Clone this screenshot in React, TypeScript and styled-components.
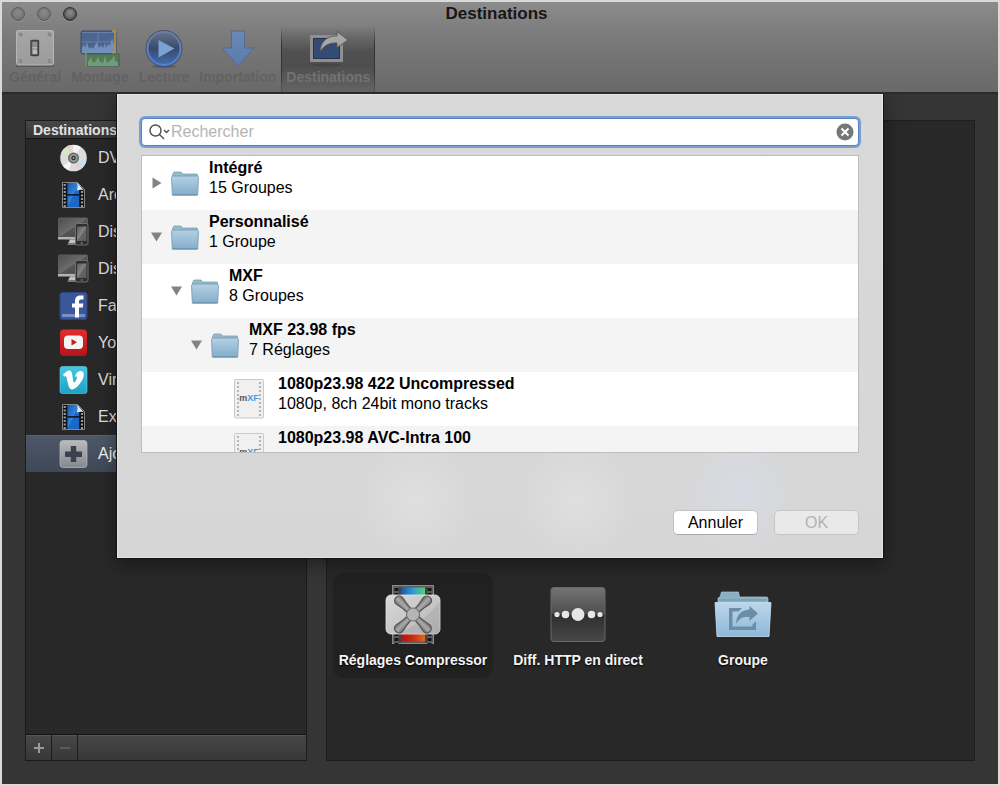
import React from "react";
import styled, { createGlobalStyle, css } from "styled-components";

const GlobalStyle = createGlobalStyle`
  * { box-sizing: border-box; }
  body {
    margin: 0;
    background: #dadada;
    font-family: "Liberation Sans", Arial, sans-serif;
    font-size: 16px;
    color: #000;
  }
  button, input { font: inherit; color: inherit; }
  ul { list-style: none; margin: 0; padding: 0; }
  svg { display: block; flex: none; }
`;

const Page = styled.div`
  min-height: 100vh;
  padding: 2px;
  display: flex;
`;

const Window = styled.div`
  position: relative;
  flex: 1;
  display: flex;
  flex-direction: column;
  min-width: 0;
  background: #353535;
`;

const Header = styled.header`
  background: linear-gradient(#8c8c8c, #7a7a7a 40%, #696969);
  border-bottom: 2px solid #2b2b2b;
`;

const TitleBar = styled.div`
  display: grid;
  grid-template-columns: 1fr auto 1fr;
  align-items: center;
  height: 24px;
  padding: 0 16px 0 9px;
`;

const Lights = styled.div`
  display: flex;
  gap: 12px;
`;

const Light = styled.button<{ $dark?: boolean }>`
  width: 14px;
  height: 14px;
  padding: 0;
  border: 1px solid ${(p) => (p.$dark ? "#2c2c2c" : "#5c5c5c")};
  border-radius: 50%;
  background: radial-gradient(circle at 50% 35%, ${(p) => (p.$dark ? "#8c8c8c, #626262" : "#8a8a8a, #777")} 70%);
  box-shadow: 0 1px 0 rgba(255, 255, 255, 0.15), inset 0 0 2px ${(p) => (p.$dark ? "#222" : "#666")};
`;

const Title = styled.h1`
  margin: 0;
  font-size: 17px;
  line-height: 22px;
  font-weight: bold;
  color: #161616;
`;

const Toolbar = styled.nav`
  display: flex;
  height: 66px;
  padding-left: 2px;
`;

const Tool = styled.button<{ $active?: boolean }>`
  display: flex;
  flex-direction: column;
  align-items: center;
  padding: 4px 5px 0;
  border: 0;
  background: none;
  font-size: 14px;
  font-weight: bold;
  line-height: 18px;
  color: #626262;
  ${(p) =>
    p.$active &&
    css`
      color: #727272;
      background:
        linear-gradient(transparent, #333 30%, #333 70%, #555) left / 1px 100% no-repeat,
        linear-gradient(transparent, #333 30%, #333 70%, #555) right / 1px 100% no-repeat,
        linear-gradient(transparent, #505050 40%, #4e4e4e 60%, #646464);
    `}
`;

const Main = styled.main`
  flex: 1;
  display: flex;
  gap: 19px;
  padding: 26px 23px 23px;
`;

const Sidebar = styled.aside`
  flex: none;
  width: 282px;
  display: flex;
  flex-direction: column;
  background: #282828;
  border: 1px solid #1b1b1b;
`;

const SidebarTitle = styled.h2`
  margin: 0;
  padding: 0 7px;
  font-size: 14px;
  line-height: 18px;
  height: 18px;
  color: #e2e2e2;
  background: linear-gradient(#474747, #363636);
  border-bottom: 1px solid #161616;
`;

const Destinations = styled.ul`
  flex: 1;
`;

const Destination = styled.li<{ $selected?: boolean }>`
  display: flex;
  align-items: center;
  gap: 9px;
  height: 37px;
  padding-left: 31px;
  color: #dedede;
  white-space: nowrap;
  ${(p) =>
    p.$selected &&
    css`
      background: linear-gradient(#4e5868, #3f4856);
      box-shadow: inset 0 1px 0 #586273;
      color: #f2f2f2;
    `}
`;

const SidebarFooter = styled.div`
  display: flex;
  height: 26px;
  border-top: 1px solid #141414;
  background: linear-gradient(#484848, #373737);
  box-shadow: inset 0 1px 0 #565656;
`;

const FooterButton = styled.button<{ $faint?: boolean }>`
  display: grid;
  place-items: center;
  width: 26px;
  padding: 0;
  border: 0;
  border-right: 1px solid #1c1c1c;
  background: none;
  color: ${(p) => (p.$faint ? "#5c5c5c" : "#9a9a9a")};
`;

const Gallery = styled.section`
  flex: 1;
  min-width: 0;
  padding: 452px 6px 80px;
  background: #282828;
  border: 1px solid #1e1e1e;
`;

const Tiles = styled.div`
  display: flex;
  flex-wrap: wrap;
  gap: 5px;
`;

const Tile = styled.button<{ $selected?: boolean }>`
  width: 160px;
  height: 105px;
  display: flex;
  flex-direction: column;
  align-items: center;
  gap: 6px;
  padding: 11px 0 0;
  border: 0;
  border-radius: 10px;
  background: ${(p) => (p.$selected ? "#212121" : "none")};
  color: #f4f4f4;
  font-size: 14px;
  font-weight: bold;
  line-height: 20px;
  white-space: nowrap;
  text-shadow: 0 1px 2px #000;
`;

const Sheet = styled.div`
  position: absolute;
  top: 92px;
  left: 115px;
  right: 115px;
  padding: 24px 24px 23px;
  background:
    radial-gradient(circle at 299px 406px, rgba(236, 236, 236, 0.4), transparent 60px),
    radial-gradient(circle at 460px 406px, rgba(236, 236, 236, 0.4), transparent 60px),
    radial-gradient(circle at 622px 402px, rgba(216, 222, 236, 0.6), transparent 60px),
    linear-gradient(#d9d9d9, #d6d6d6);
  box-shadow: inset 0 0 0 1px rgba(255, 255, 255, 0.35), 0 0 0 1px #141414, 0 6px 18px rgba(0, 0, 0, 0.4);
  clip-path: inset(0 -30px -40px -30px);
`;

const SearchField = styled.label`
  display: flex;
  align-items: center;
  height: 28px;
  padding: 0 4px 0 7px;
  background: #fff;
  border: 1px solid #5b83bc;
  border-radius: 4px;
  box-shadow: 0 0 0 2px #7b9fd4;
`;

const SearchInput = styled.input`
  flex: 1;
  min-width: 0;
  padding: 0;
  border: 0;
  outline: 0;
  background: none;
  line-height: 20px;
  &::placeholder { color: #b4b4b4; opacity: 1; }
`;

const ClearButton = styled.button`
  padding: 0;
  border: 0;
  background: none;
`;

const Browser = styled.ul`
  && { margin-top: 9px; }
  height: 298px;
  overflow: hidden;
  background: #fff;
  border: 1px solid #bdbdbd;
`;

const BrowserRow = styled.li<{ $depth: number }>`
  display: flex;
  height: 54px;
  padding-left: ${(p) => 9 + p.$depth * 20}px;
  &:nth-child(even) { background: #f4f4f4; }
`;

const PresetRow = styled(BrowserRow)`
  padding-left: 92px;
`;

const Disclosure = styled.button`
  align-self: center;
  width: 10px;
  height: 12px;
  margin-right: 10px;
  padding: 0;
  border: 0;
  background: none;
`;

const RowIcon = styled.span<{ $gap: number }>`
  align-self: center;
  margin-right: ${(p) => p.$gap}px;
`;

const RowText = styled.div`
  padding-top: 2px;
  line-height: 20px;
  white-space: nowrap;
`;

const RowName = styled.div`
  font-weight: bold;
`;

const Actions = styled.div`
  display: flex;
  justify-content: flex-end;
  gap: 16px;
  margin-top: 57px;
`;

const ActionButton = styled.button`
  width: 85px;
  height: 25px;
  padding: 0;
  border: 1px solid #c2c2c2;
  border-bottom-color: #a9a9a9;
  border-radius: 5px;
  background: #fff;
  line-height: 20px;
  &:disabled {
    background: #e9e9e9;
    border-color: #c6c6c6;
    color: #b2b2b2;
  }
`;

/* Toolbar icons */

const SwitchIcon = () => (
  <svg width="38" height="38" viewBox="0 0 38 38">
    <defs>
      <linearGradient id="plate" x1="0" y1="0" x2="0" y2="1">
        <stop offset="0" stopColor="#a6a6a6" /><stop offset="1" stopColor="#9b9c9e" />
      </linearGradient>
    </defs>
    <rect x="0" y="2" width="38" height="35" rx="1.5" fill="#4d4d4d" opacity=".7" />
    <rect x=".5" y=".5" width="37" height="34.500" rx="1.5" fill="url(#plate)" stroke="#b6b6b6" />
    {[[4.5, 4.5], [33.5, 4.5], [4.5, 31], [33.5, 31]].map(([x, y]) => (
      <g key={`${x}-${y}`}><circle cx={x} cy={y} r="1.9" fill="#7d7d7d" /><path d={`M${x - 1} ${y + 1}l2-2`} stroke="#b5b5b5" strokeWidth=".8" /></g>
    ))}
    <rect x="15" y="10.500" width="7.500" height="15" rx=".8" fill="#6a6a6a" stroke="#404040" strokeWidth="1.300" />
    <rect x="16.500" y="12" width="4.500" height="4" fill="#929292" /><rect x="16.500" y="16" width="4.500" height="8" fill="#bababa" />
    <path d="M16.500 16.500h4.500M16.500 19h4.500" stroke="#868686" />
  </svg>
);

const TimelineIcon = () => (
  <svg width="40" height="38" viewBox="0 0 40 38">
    <rect x="1" y="1" width="35" height="23" rx="2" fill="#4b638a" stroke="#3d4c69" />
    <path d="M2 2h33v10H2z" fill="#4c6690" /><path d="M2 2.500h33M18 2v10M2 12h33" stroke="#6781aa" />
    <path d="M2 23v-5l2-4 1 4 2-6 2 7 2-2 2 2 2-4 2-3 2 6 2-3 2 3 2-5 1 5 2-4 2 2 2-8 2 7 1 2v6z" fill="#7190bf" />
    <path d="M32 1h3v22h-3" fill="none" stroke="#bf9648" strokeWidth="1.6" />
    <path d="M6 24h33v12H7z" fill="#547a5c" stroke="#41604a" />
    <path d="M6 20v16" stroke="#729b78" strokeWidth="1.5" />
    <path d="M8 36v-4l3-5 2 6 3-2 2-4 2 5 3 1 2-7 2 7 3-2 2-2 2-4 1 6 3 1v4z" fill="#719c79" />
  </svg>
);

const PlayIcon = () => (
  <svg width="40" height="38" viewBox="0 0 40 38">
    <defs>
      <linearGradient id="play" x1="0" y1="0" x2="0" y2="1">
        <stop offset="0" stopColor="#64728c" /><stop offset=".5" stopColor="#384b6d" /><stop offset="1" stopColor="#456db0" />
      </linearGradient>
      <linearGradient id="rim" x1="0" y1="0" x2="0" y2="1">
        <stop offset="0" stopColor="#6e7f9d" /><stop offset="1" stopColor="#4c83dc" />
      </linearGradient>
    </defs>
    <ellipse cx="20" cy="36.500" rx="12" ry="1.5" fill="#4b4b4b" opacity=".6" />
    <circle cx="20" cy="18.500" r="18.500" fill="#45536d" />
    <circle cx="20" cy="18.500" r="16.500" fill="url(#play)" stroke="url(#rim)" strokeWidth="2" />
    <path d="M14.500 10l16 8.500-16 9z" fill="#7da1d3" />
  </svg>
);

const ImportIcon = () => (
  <svg width="38" height="38" viewBox="0 0 38 38">
    <defs>
      <linearGradient id="import" x1="0" y1="0" x2="0" y2="1">
        <stop offset="0" stopColor="#6a88b8" /><stop offset="1" stopColor="#5b7bae" />
      </linearGradient>
    </defs>
    <path d="M12.500 1h13v17h9.500L19 36 3 18h9.500z" fill="url(#import)" stroke="#546a90" />
  </svg>
);

const ShareIcon = () => (
  <svg width="40" height="38" viewBox="0 0 40 38">
    <ellipse cx="18" cy="35" rx="15" ry="1.5" fill="#3f3f3f" opacity=".6" />
    <rect x="3.500" y="6.500" width="30" height="24" fill="#344c74" stroke="#8f8f8f" strokeWidth="3" />
    <path d="M5.500 8.500h26v20h-26z" fill="none" stroke="#243350" />
    <path d="M12 22C12.500 11 20 5.500 29 6V1.500l11 8.500-11 7.500v-4.500C22 12.500 16 15 12 22z" fill="#a6a6a6" stroke="#515151" strokeWidth=".8" />
  </svg>
);

/* Sidebar icons, all in a 32px wide box */

const DiscIcon = () => (
  <svg width="32" height="30" viewBox="0 0 32 30">
    <circle cx="16.500" cy="15" r="13.300" fill="#dcdcd8" />
    <path d="M16.500 15L4 11a13 13 0 0 1 5-7z" fill="#cfe8c9" /><path d="M16.500 15L9 4a13 13 0 0 1 4-2z" fill="#f2d1bc" />
    <path d="M16.500 15L29 19a13 13 0 0 1-4 6z" fill="#c4e2ec" /><path d="M16.500 15L25 25a13 13 0 0 1-4 2z" fill="#e9cbdc" />
    <path d="M16.500 15L16 2a13 13 0 0 1 8 2z" fill="#f5f5f5" /><path d="M16.500 15L12 27a13 13 0 0 1-6-4z" fill="#f5f5f5" />
    <circle cx="16.500" cy="15" r="5.500" fill="#666" /><circle cx="16.500" cy="15" r="4" fill="#999" />
    <circle cx="16.500" cy="15" r="2.200" fill="#2d2d2d" /><circle cx="16.500" cy="15" r="1" fill="#aaa" />
  </svg>
);

const FilmIcon = () => (
  <svg width="32" height="30" viewBox="0 0 32 30">
    <defs>
      <linearGradient id="film" x1="0" y1="0" x2="1" y2="1">
        <stop offset="0" stopColor="#1559ad" /><stop offset=".5" stopColor="#3585dc" /><stop offset=".52" stopColor="#1c69c8" /><stop offset="1" stopColor="#1c65c2" />
      </linearGradient>
    </defs>
    <path d="M5.500 2.500h15l7 7v18h-22z" fill="#0d0d0d" stroke="#858585" />
    <path d="M10 3h12v11H10zM10 15.500h12V27H10z" fill="url(#film)" />
    <path d="M7.700 4v23M25 11v16" stroke="#9a9a9a" strokeWidth="2.200" strokeDasharray="2 1.500" />
    <path d="M10 3v24M22.500 10v17M10 14.800h12" stroke="#0f2440" />
    <path d="M19.500 2l8 9c-2-2-5-1.500-8-.5 1.500-3 1.500-6 0-8.500z" fill="#e8e8e8" />
  </svg>
);

const DevicesIcon = () => (
  <svg width="32" height="30" viewBox="0 0 32 30">
    <defs>
      <linearGradient id="screen" x1="0" y1="0" x2="1" y2="1">
        <stop offset="0" stopColor="#4d4d4d" /><stop offset=".5" stopColor="#6c6c6c" /><stop offset=".52" stopColor="#565656" /><stop offset="1" stopColor="#444" />
      </linearGradient>
      <linearGradient id="phone" x1="0" y1="0" x2="1" y2="1">
        <stop offset="0" stopColor="#5b5b5b" /><stop offset=".5" stopColor="#858585" /><stop offset=".52" stopColor="#666" /><stop offset="1" stopColor="#5a5a5a" />
      </linearGradient>
    </defs>
    <rect x="1.500" y="1" width="29" height="19" rx="1" fill="url(#screen)" stroke="#5e5e5e" />
    <path d="M1 20h18v2.500H1z" fill="#b4b4b4" /><path d="M13 22.500h5v4h-7z" fill="#c2c2c2" /><path d="M10.500 27.300h9" stroke="#8a8a8a" />
    <rect x="18.500" y="6.500" width="12.500" height="21.500" rx="2" fill="#2e2e2e" stroke="#707070" />
    <path d="M20 9.500h9.500v14.500H20z" fill="url(#phone)" /><circle cx="24.700" cy="26" r="1" fill="#777" />
  </svg>
);

const FacebookIcon = () => (
  <svg width="32" height="30" viewBox="0 0 32 30">
    <rect x="3" y="1.500" width="27" height="27" rx="2.500" fill="#3a579b" stroke="#2c4580" />
    <path d="M5 23h23v3H5z" fill="#7b90c0" />
    <path d="M18 26.500v-10h-3v-4h3V10c0-4 2.500-5.500 5.500-5.500h3V8.500h-2c-2 0-2.500.7-2.500 2v2h4.300l-.5 4H22v10z" fill="#fff" />
  </svg>
);

const YouTubeIcon = () => (
  <svg width="32" height="30" viewBox="0 0 32 30">
    <defs>
      <linearGradient id="tube" x1="0" y1="0" x2="0" y2="1">
        <stop offset="0" stopColor="#e52c2e" /><stop offset="1" stopColor="#b81218" />
      </linearGradient>
    </defs>
    <rect x="3" y="1.500" width="27" height="26.500" rx="4" fill="url(#tube)" />
    <rect x="7" y="7.500" width="19" height="13.500" rx="4" fill="#f4f4f4" />
    <path d="M14.500 11l5.500 3.200-5.500 3.300z" fill="#c71b20" />
  </svg>
);

const VimeoIcon = () => (
  <svg width="32" height="30" viewBox="0 0 32 30">
    <defs>
      <linearGradient id="vim" x1="0" y1="0" x2="0" y2="1">
        <stop offset="0" stopColor="#4bc6e0" /><stop offset="1" stopColor="#1ba3c6" />
      </linearGradient>
    </defs>
    <rect x="3" y="1.500" width="27" height="27" rx="2.500" fill="url(#vim)" stroke="#68d2e6" strokeWidth=".6" />
    <path d="M6 9.500c2.500-2.300 4.500-4 6-4 2.300-.1 3 2 3.400 5 .5 3.500.9 7 1.700 7 .8 0 2.800-3.300 2.900-4.800.1-1.400-1-1.500-2.200-1 1-3.500 3.300-6 6.200-5.700 2.400.2 3 2 2.700 4.500-.7 5.500-7.500 14-11.500 14-3.200 0-3.900-4.500-4.800-8.500-.6-2.800-1-5-1.700-5-.4 0-.8.300-1.500.8z" fill="#fff" />
  </svg>
);

const AddIcon = () => (
  <svg width="32" height="30" viewBox="0 0 32 30">
    <defs>
      <linearGradient id="add" x1="0" y1="0" x2="0" y2="1">
        <stop offset="0" stopColor="#b9bbbe" /><stop offset="1" stopColor="#85888d" />
      </linearGradient>
    </defs>
    <rect x="3" y="1.500" width="27" height="27" rx="3" fill="url(#add)" stroke="#c6c8cb" strokeWidth=".6" />
    <path d="M13.800 7h5.400v5.500H25v5.400h-5.800V23h-5.400v-5.100H8v-5.400h5.800z" fill="#3b424e" />
  </svg>
);

/* Gallery icons */

const CompressorIcon = () => (
  <svg width="60" height="60" viewBox="0 0 60 60">
    <defs>
      <linearGradient id="cool"><stop offset="0" stopColor="#1a55b5" /><stop offset=".5" stopColor="#2f9bd0" /><stop offset="1" stopColor="#55d07c" /></linearGradient>
      <linearGradient id="warm"><stop offset="0" stopColor="#b5120e" /><stop offset=".5" stopColor="#c62c14" /><stop offset="1" stopColor="#dd6b20" /></linearGradient>
      <linearGradient id="body" x1="0" y1="0" x2="1" y2="1"><stop offset="0" stopColor="#dadada" /><stop offset="1" stopColor="#b4b4b4" /></linearGradient>
      <linearGradient id="blade" x1="0" y1="0" x2="1" y2="0"><stop offset="0" stopColor="#6e6e6e" /><stop offset=".5" stopColor="#acacac" /><stop offset="1" stopColor="#707070" /></linearGradient>
    </defs>
    <rect x="9.500" y="1.500" width="41" height="58" fill="#5d5d5d" stroke="#8a8a8a" />
    <path d="M13.500 4v56M46.500 4v56" stroke="#161616" strokeWidth="4" strokeDasharray="3 2" />
    <path d="M17 3v56M43 3v56" stroke="#2a2a2a" />
    <path d="M18 3.500h24v9H18z" fill="url(#cool)" /><path d="M18 50h24v7.500H18z" fill="url(#warm)" />
    <rect x="3" y="11" width="54" height="39" rx="5" fill="url(#body)" stroke="#e4e4e4" strokeWidth=".8" />
    <path d="M57 17v28a5 5 0 0 1-5 5H12C30 44 46 32 57 17z" fill="#9d9d9d" opacity=".3" />
    <g fill="url(#blade)" stroke="#555" strokeWidth="1.200">
      {[45, 135, 225, 315].map((angle) => (
        <path key={angle} transform={`rotate(${angle} 30 30.500)`} d="M27 26C28 20 25.500 14 25.500 11C25.500 5 34.500 5 34.500 11C34.500 14 32 20 33 26z" />
      ))}
      <circle cx="30" cy="30.500" r="6.500" fill="#b5b5b5" stroke="#777" />
    </g>
  </svg>
);

const StreamingIcon = () => (
  <svg width="60" height="60" viewBox="0 0 60 60">
    <defs>
      <linearGradient id="stream" x1="0" y1="0" x2="0" y2="1">
        <stop offset="0" stopColor="#747474" /><stop offset=".49" stopColor="#4d4d4d" /><stop offset=".5" stopColor="#2e2e2e" /><stop offset="1" stopColor="#484848" />
      </linearGradient>
    </defs>
    <rect x="3" y="3.500" width="54" height="54" rx="3" fill="url(#stream)" stroke="#686868" />
    <g fill="#e6e6e6">
      <circle cx="9" cy="30.500" r="2.600" /><circle cx="17.500" cy="30.500" r="3.800" /><circle cx="30" cy="30.500" r="6.500" />
      <circle cx="43.500" cy="30.500" r="3.800" /><circle cx="52" cy="30.500" r="2.600" />
    </g>
  </svg>
);

const GroupIcon = () => (
  <svg width="60" height="60" viewBox="0 0 60 60">
    <defs>
      <linearGradient id="group" x1="0" y1="0" x2="0" y2="1">
        <stop offset="0" stopColor="#bcd6e9" /><stop offset="1" stopColor="#8fb9d8" />
      </linearGradient>
    </defs>
    <path d="M5 22v-8l2-1 1.500-5h17l1 5H54l1 1v8z" fill="#8bb0c4" stroke="#a8c8d8" strokeWidth=".7" />
    <path d="M6 16h48" stroke="#6f95ab" />
    <path d="M2 18.500h56l-2 34H4z" fill="url(#group)" stroke="#c8e1f1" strokeWidth=".8" />
    <path d="M29 24H16v22h27v-9l-3.500 3.500v2H19.500V27.500h6z" fill="#6b8da8" />
    <path d="M23 40c.5-9.500 5-14 13.500-14.500V22l8.500 7.500-8.500 7.500V33C30 32.500 26.500 34 23 40z" fill="#6b8da8" />
  </svg>
);

/* Sheet icons */

const FolderIcon = () => (
  <svg width="28" height="25" viewBox="0 0 28 25">
    <defs>
      <linearGradient id="folder" x1="0" y1="0" x2="0" y2="1">
        <stop offset="0" stopColor="#b6d0e2" /><stop offset="1" stopColor="#82aecb" />
      </linearGradient>
    </defs>
    <path d="M1.500 7V3.500L3 1h7l1.500 2H26l.5 1v4z" fill="#97b9cc" stroke="#7d9fb3" strokeWidth=".8" />
    <path d="M.5 6.500L1.500 5h25l1 1.500-.8 17.500H1.300z" fill="url(#folder)" stroke="#7397b0" strokeWidth=".8" />
    <path d="M1.500 24h25" stroke="#668ba5" />
  </svg>
);

const MxfText = styled.text`
  font: bold 9px "Liberation Sans", Arial, sans-serif;
`;

const PresetIcon = () => (
  <svg width="30" height="40" viewBox="0 0 30 40">
    <defs>
      <linearGradient id="mxf">
        <stop offset="0" stopColor="#555" /><stop offset=".38" stopColor="#555" />
        <stop offset=".42" stopColor="#3f8fd8" /><stop offset="1" stopColor="#3f9be8" />
      </linearGradient>
    </defs>
    <rect x=".5" y=".5" width="29" height="38.500" rx="1" fill="#f0f0f0" stroke="#c9c9c9" />
    <path d="M4 3v34M26 3v34" stroke="#b5b5b5" strokeWidth="2" strokeDasharray="2 2" />
    <MxfText x="15" y="22" textAnchor="middle" fill="url(#mxf)">mXF</MxfText>
  </svg>
);

const Magnifier = () => (
  <svg width="22" height="18" viewBox="0 0 22 18" fill="none" stroke="#4d4d4d" strokeWidth="1.400">
    <circle cx="6.500" cy="7.500" r="5.500" /><path d="M10.500 11.500l4.500 4.500M15 7l2.500 2.500L20 7" />
  </svg>
);

const ClearIcon = () => (
  <svg width="18" height="18" viewBox="0 0 18 18">
    <circle cx="9" cy="9" r="8.500" fill="#777" /><path d="M5.500 5.500l7 7M12.500 5.500l-7 7" stroke="#fff" strokeWidth="2" />
  </svg>
);

const Triangle = ({ open }: { open: boolean }) => (
  <svg width="11" height="12" viewBox="0 0 11 12">
    <path d={open ? "M0 1.500h11L5.500 10.500z" : "M1.500 .5l9 5.500-9 5.500z"} fill="#838383" />
  </svg>
);

const tools = [
  { label: "Général", Icon: SwitchIcon },
  { label: "Montage", Icon: TimelineIcon },
  { label: "Lecture", Icon: PlayIcon },
  { label: "Importation", Icon: ImportIcon },
  { label: "Destinations", Icon: ShareIcon, active: true },
];

const destinations = [
  { label: "DVD", Icon: DiscIcon },
  { label: "Archive", Icon: FilmIcon },
  { label: "Dispositifs Apple 720p", Icon: DevicesIcon },
  { label: "Dispositifs Apple 1080p", Icon: DevicesIcon },
  { label: "Facebook", Icon: FacebookIcon },
  { label: "YouTube", Icon: YouTubeIcon },
  { label: "Vimeo", Icon: VimeoIcon },
  { label: "Exporter le fichier", Icon: FilmIcon },
  { label: "Ajouter une destination", Icon: AddIcon, selected: true },
];

const tiles = [
  { label: "Réglages Compressor", Icon: CompressorIcon, selected: true },
  { label: "Diff. HTTP en direct", Icon: StreamingIcon },
  { label: "Groupe", Icon: GroupIcon },
];

const groups = [
  { name: "Intégré", detail: "15 Groupes", depth: 0, open: false },
  { name: "Personnalisé", detail: "1 Groupe", depth: 0, open: true },
  { name: "MXF", detail: "8 Groupes", depth: 1, open: true },
  { name: "MXF 23.98 fps", detail: "7 Réglages", depth: 2, open: true },
];

const presets = [
  { name: "1080p23.98 422 Uncompressed", detail: "1080p, 8ch 24bit mono tracks" },
  { name: "1080p23.98 AVC-Intra 100", detail: "" },
];

export default function App() {
  return (
    <>
      <GlobalStyle />
      <Page>
        <Window>
          <Header>
            <TitleBar>
              <Lights>
                <Light aria-label="Fermer" />
                <Light aria-label="Réduire" />
                <Light aria-label="Agrandir" $dark />
              </Lights>
              <Title>Destinations</Title>
            </TitleBar>
            <Toolbar>
              {tools.map(({ label, Icon, active }) => (
                <Tool key={label} $active={active}>
                  <Icon />
                  {label}
                </Tool>
              ))}
            </Toolbar>
          </Header>

          <Main>
            <Sidebar>
              <SidebarTitle>Destinations</SidebarTitle>
              <Destinations>
                {destinations.map(({ label, Icon, selected }) => (
                  <Destination key={label} $selected={selected}>
                    <Icon />
                    {label}
                  </Destination>
                ))}
              </Destinations>
              <SidebarFooter>
                <FooterButton aria-label="Ajouter">
                  <svg width="10" height="10"><path d="M5 0v10M0 5h10" stroke="currentColor" strokeWidth="2" /></svg>
                </FooterButton>
                <FooterButton aria-label="Supprimer" $faint>
                  <svg width="10" height="10"><path d="M0 5h10" stroke="currentColor" strokeWidth="2" /></svg>
                </FooterButton>
              </SidebarFooter>
            </Sidebar>

            <Gallery>
              <Tiles>
                {tiles.map(({ label, Icon, selected }) => (
                  <Tile key={label} $selected={selected}>
                    <Icon />
                    {label}
                  </Tile>
                ))}
              </Tiles>
            </Gallery>
          </Main>

          <Sheet role="dialog" aria-label="Réglages Compressor">
            <SearchField>
              <Magnifier />
              <SearchInput type="text" placeholder="Rechercher" aria-label="Rechercher" />
              <ClearButton type="button" aria-label="Effacer"><ClearIcon /></ClearButton>
            </SearchField>
            <Browser>
              {groups.map(({ name, detail, depth, open }) => (
                <BrowserRow key={name} $depth={depth}>
                  <Disclosure aria-label={name} aria-expanded={open}><Triangle open={open} /></Disclosure>
                  <RowIcon $gap={10}><FolderIcon /></RowIcon>
                  <RowText>
                    <RowName>{name}</RowName>
                    {detail}
                  </RowText>
                </BrowserRow>
              ))}
              {presets.map(({ name, detail }) => (
                <PresetRow key={name} $depth={3}>
                  <RowIcon $gap={14}><PresetIcon /></RowIcon>
                  <RowText>
                    <RowName>{name}</RowName>
                    {detail}
                  </RowText>
                </PresetRow>
              ))}
            </Browser>
            <Actions>
              <ActionButton type="button">Annuler</ActionButton>
              <ActionButton type="button" disabled>OK</ActionButton>
            </Actions>
          </Sheet>
        </Window>
      </Page>
    </>
  );
}
